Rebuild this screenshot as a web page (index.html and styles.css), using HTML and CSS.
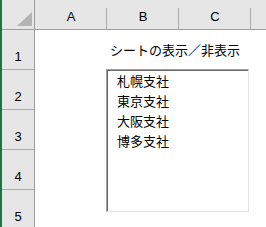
FILE: index.html
```html
<!DOCTYPE html>
<html lang="ja">
<head>
<meta charset="utf-8">
<link rel="stylesheet" href="styles.css">
</head>
<body>
<div class="sheet">
  <div class="edge"></div>
  <div class="grid">
    <div class="corner"><span class="tri"></span></div>
    <div class="colhead">A</div>
    <div class="colhead">B</div>
    <div class="colhead">C</div>
    <div class="colhead rest"></div>

    <div class="rowhead">1</div>
    <div class="cell"></div>
    <div class="cell title">シートの表示／非表示</div>
    <div class="cell"></div>

    <div class="rowhead">2</div>
    <div class="cell"></div><div class="cell"></div><div class="cell"></div><div class="cell"></div>
    <div class="rowhead">3</div>
    <div class="cell"></div><div class="cell"></div><div class="cell"></div><div class="cell"></div>
    <div class="rowhead">4</div>
    <div class="cell"></div><div class="cell"></div><div class="cell"></div><div class="cell"></div>
    <div class="rowhead">5</div>
    <div class="cell"></div><div class="cell"></div><div class="cell"></div><div class="cell"></div>
  </div>
  <ul class="listbox">
    <li>札幌支社</li>
    <li>東京支社</li>
    <li>大阪支社</li>
    <li>博多支社</li>
  </ul>
</div>
</body>
</html>
```
FILE: styles.css
```css
html, body {
  margin: 0;
  padding: 0;
  background: #ffffff;
  overflow: hidden;
}
body {
  width: 266px;
  height: 227px;
  font-family: "Noto Sans CJK JP", "Liberation Sans", sans-serif;
  color: #000;
}
.sheet {
  position: relative;
  display: flex;
  width: 266px;
  height: 227px;
  overflow: hidden;
}
.edge {
  width: 2px;
  flex: none;
  background: #217346;
}
.grid {
  display: grid;
  grid-template-columns: 33px 72px 72px 72px 1fr;
  grid-template-rows: 30px 40px 40px 40px 40px 40px;
  flex: 1;
}
.corner {
  background: #e6e6e6;
  border-right: 1px solid #9e9e9e;
  border-bottom: 1px solid #9e9e9e;
  position: relative;
}
.tri {
  position: absolute;
  left: 15px;
  top: 12px;
  width: 0;
  height: 0;
  border-left: 15px solid transparent;
  border-bottom: 14px solid #b4b4b4;
}
.colhead {
  background: #e6e6e6 linear-gradient(#ababab, #ababab) no-repeat right 0 top 8px / 1px 21px;
  border-bottom: 1px solid #9e9e9e;
  font-family: "Liberation Sans", sans-serif;
  font-size: 13px;
  line-height: 13px;
  padding-top: 10px;
  text-align: center;
  box-sizing: border-box;
}
.colhead.rest {
  background: #e6e6e6;
}
.rowhead {
  background: #e6e6e6;
  border-right: 1px solid #9e9e9e;
  border-bottom: 1px solid #ababab;
  font-family: "Liberation Sans", sans-serif;
  font-size: 13px;
  display: flex;
  align-items: flex-end;
  justify-content: center;
  padding-bottom: 5px;
  box-sizing: border-box;
}
.cell {
  background: #fff;
}
.title {
  grid-column: span 2;
  font-size: 13px;
  white-space: nowrap;
  display: flex;
  align-items: center;
  padding-left: 3px;
  padding-bottom: 1px;
}
.listbox {
  position: absolute;
  left: 106px;
  top: 69px;
  width: 143px;
  height: 143px;
  box-sizing: border-box;
  margin: 0;
  padding: 1px 0 0 10px;
  list-style: none;
  background: #fff;
  border: 1px solid;
  border-color: #a0a0a0 #e3e3e3 #e3e3e3 #a0a0a0;
  box-shadow: inset 1px 1px 0 #696969;
  font-size: 13px;
  line-height: 20px;
}
.listbox li {
  height: 20px;
  white-space: nowrap;
}
```
